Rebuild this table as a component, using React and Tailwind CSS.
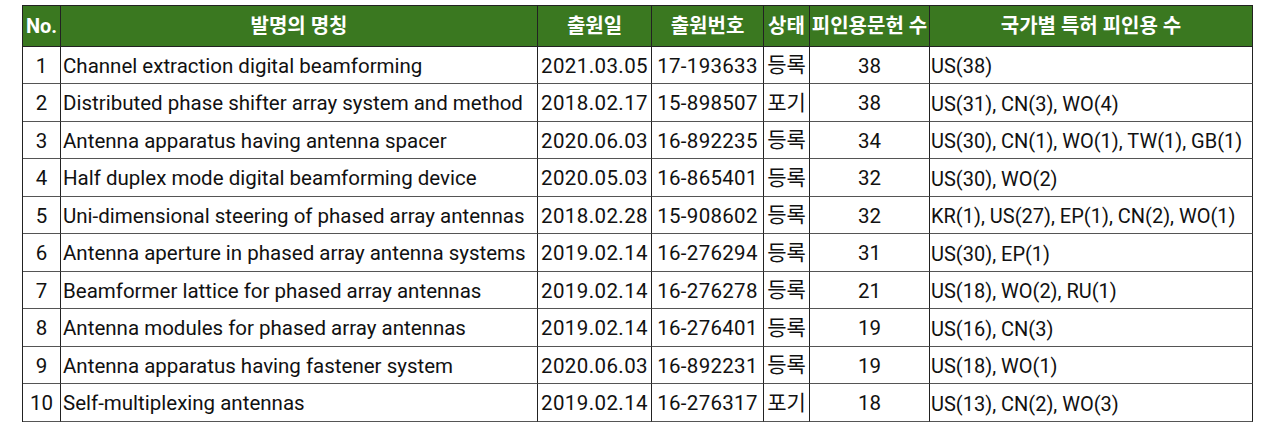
const rows = [
  ['1', 'Channel extraction digital beamforming', '2021.03.05', '17-193633', '등록', '38', 'US(38)'],
  ['2', 'Distributed phase shifter array system and method', '2018.02.17', '15-898507', '포기', '38', 'US(31), CN(3), WO(4)'],
  ['3', 'Antenna apparatus having antenna spacer', '2020.06.03', '16-892235', '등록', '34', 'US(30), CN(1), WO(1), TW(1), GB(1)'],
  ['4', 'Half duplex mode digital beamforming device', '2020.05.03', '16-865401', '등록', '32', 'US(30), WO(2)'],
  ['5', 'Uni-dimensional steering of phased array antennas', '2018.02.28', '15-908602', '등록', '32', 'KR(1), US(27), EP(1), CN(2), WO(1)'],
  ['6', 'Antenna aperture in phased array antenna systems', '2019.02.14', '16-276294', '등록', '31', 'US(30), EP(1)'],
  ['7', 'Beamformer lattice for phased array antennas', '2019.02.14', '16-276278', '등록', '21', 'US(18), WO(2), RU(1)'],
  ['8', 'Antenna modules for phased array antennas', '2019.02.14', '16-276401', '등록', '19', 'US(16), CN(3)'],
  ['9', 'Antenna apparatus having fastener system', '2020.06.03', '16-892231', '등록', '19', 'US(18), WO(1)'],
  ['10', 'Self-multiplexing antennas', '2019.02.14', '16-276317', '포기', '18', 'US(13), CN(2), WO(3)'],
];

const headers = ['No.', '발명의 명칭', '출원일', '출원번호', '상태', '피인용문헌 수', '국가별 특허 피인용 수'];

const cellCls = [
  'justify-center text-[20.5px]',
  'justify-start pl-[2px] text-[20.5px]',
  'justify-center text-[20.5px] tracking-[0.4px]',
  'justify-center text-[20.5px] tracking-[0.3px]',
  'justify-center text-[21px]',
  'justify-center text-[20.5px]',
  'justify-start pl-[1px] text-[20px]',
];

export default function App() {
  return (
    <div className="w-[1280px] h-[423px] bg-white pt-[5px] pl-[22px]" style={{ fontFamily: 'Roboto, "Noto Sans CJK KR", sans-serif' }}>
      <div className="grid grid-cols-[38px_477px_114px_112px_46px_120px_323px] w-[1231px] border-l border-t border-[#222]">
        {headers.map((h) => (
          <div key={h} className="h-[41px] bg-[#3a7820] text-white font-bold text-[20px] flex items-center justify-center border-r border-b border-[#222] whitespace-nowrap">
            {h}
          </div>
        ))}
        {rows.map((r, ri) =>
          r.map((c, ci) => (
            <div
              key={ri + '-' + ci}
              className={`${ri % 2 === 0 ? 'h-[37px]' : 'h-[38px]'} flex items-center pt-[2px] ${cellCls[ci]} text-[#111] border-b border-b-[#555] border-r border-r-[#222] whitespace-nowrap overflow-hidden`}
            >
              {c}
            </div>
          ))
        )}
      </div>
    </div>
  );
}
